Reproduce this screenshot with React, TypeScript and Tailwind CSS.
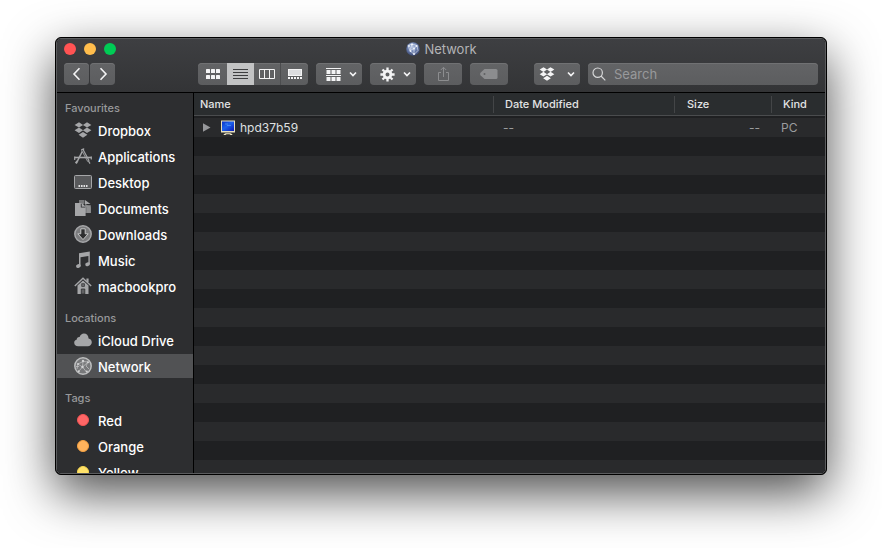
import type { ReactNode } from "react";

function DropboxIcon({ className }: { className?: string }) {
    return (
        <svg className={className} viewBox="0 0 18 16" fill="currentColor">
            <path d="M5 0.2 9.1 2.9 5 5.6 0.6 2.9ZM13 0.2 17.4 2.9 13 5.6 8.9 2.9ZM5 5.5 9.1 8.2 5 10.9 0.6 8.2ZM13 5.5 17.4 8.2 13 10.9 8.9 8.2ZM9 10 13.4 12.8 9 15.8 4.6 12.8Z" />
        </svg>
    );
}

function ApplicationsIcon() {
    return (
        <svg className="w-[18px] h-[18px]" viewBox="0 0 18 18" fill="none" stroke="currentColor">
            <path d="M9.8 1.5 3.2 14.5" strokeWidth="1.6" />
            <path d="M8 2 14.5 14.2" strokeWidth="2.6" />
            <path d="M8.3 3 14.3 14.2" strokeWidth="0.7" stroke="#2d2e30" />
            <path d="M14.2 13.5 16 16.6" strokeWidth="1.2" />
            <path d="M3.4 14 1.8 16.4" strokeWidth="2.2" />
            <path d="M0.5 10.5H17.5" strokeWidth="1.6" />
            <path d="M0.7 9.5V13M17.3 9.5V12.5" strokeWidth="1.2" />
        </svg>
    );
}

function DesktopIcon() {
    return (
        <svg className="w-[18px] h-[18px]" viewBox="0 0 18 18" fill="none">
            <rect x="0.5" y="2.5" width="17" height="13" rx="1" fill="#58595b" stroke="currentColor" />
            <path d="M4.500 13h9" stroke="#e0e0e1" strokeWidth="2" strokeDasharray="1.600 0.900" />
        </svg>
    );
}

function DocumentsIcon() {
    return (
        <svg className="w-[18px] h-[18px]" viewBox="0 0 18 18">
            <path d="M5 1h5.5v4h1.2L16.8 8.5V14H11V5H5Z" fill="#77787a" />
            <path d="M11 1v4h5.5Z" fill="currentColor" />
            <path d="M11.7 6.2h5.1V14h-4.1V8.6l-1-1Z" fill="#8d8e90" />
            <path d="M1 4h5.8v4.6h4.8V17H1Z" fill="currentColor" />
            <path d="M7.7 3.8v4h4Z" fill="currentColor" />
        </svg>
    );
}

function DownloadsIcon() {
    return (
        <svg className="w-[18px] h-[18px]" viewBox="0 0 18 18">
            <circle cx="9" cy="9" r="8.2" fill="#7b7c7e" stroke="currentColor" strokeWidth="1.5" />
            <path d="M6.800 3.800h4.400v5h3L9 14.600 3.800 8.800h3Z" fill="#2d2e30" stroke="#c4c5c6" />
        </svg>
    );
}

function MusicIcon() {
    return (
        <svg className="w-[18px] h-[18px]" viewBox="0 0 18 18" fill="currentColor">
            <path d="M5 2.2 15.8 0.5V13h-1.4V5L6.5 6.3V15H5Z" />
            <ellipse cx="4.4" cy="15" rx="2.4" ry="1.9" transform="rotate(-18 4.4 15)" />
            <ellipse cx="13.6" cy="13.3" rx="2.4" ry="1.9" transform="rotate(-18 13.6 13.3)" />
        </svg>
    );
}

function HomeIcon() {
    return (
        <svg className="w-[18px] h-[18px]" viewBox="0 0 18 18" fill="none" stroke="currentColor">
            <path d="M0.8 9 9 1.2 17.2 9" strokeWidth="1.400" />
            <path d="M13.5 1.5V5" strokeWidth="2.2" />
            <path d="M3.5 8.500 9 3.400 14.5 8.500V17h-11Z" fill="currentColor" stroke="none" />
            <path d="M7.3 17v-5h3.5v5Z" fill="#606163" stroke="#2d2e30" strokeWidth="0.8" />
            <rect x="7.8" y="6.8" width="2.5" height="2.5" fill="#77787a" stroke="#2d2e30" strokeWidth="0.8" />
        </svg>
    );
}

function CloudIcon() {
    return (
        <svg className="w-[18px] h-[18px]" viewBox="0 0 18 18" fill="currentColor">
            <path d="M4.1 15.2C1.8 15.2.2 13.8.2 11.8c0-1.7 1-2.9 2.6-3.3C2.7 7 4 5.8 5.6 6.1 6.3 3.7 8 2.5 9.9 2.5c2.6 0 4.6 2 4.7 4.9 2 .3 3.2 1.8 3.2 3.8 0 2.3-1.7 4-4 4Z" />
        </svg>
    );
}

function NetworkIcon() {
    return (
        <svg className="w-[18px] h-[18px]" viewBox="0 0 18 18" fill="none" stroke="#bcbdbe">
            <circle cx="9" cy="9" r="8.2" strokeWidth="1.5" fill="#77787a" />
            <path d="M9 4.5 4 7M9 4.5 14 5M9 4.5 8.5 10M8.5 10 4.5 14.5M8.5 10 12.5 15M4 7 3 12M14 5 12 9 15 12M4 7 8.5 10 14 5M2 9.5h3" strokeWidth="0.8" />
            <g fill="#d2d3d4" stroke="none">
                <circle cx="9" cy="4" r="1.2" />
                <circle cx="4" cy="7" r="1" />
                <circle cx="14" cy="5.2" r="1" />
                <circle cx="8.5" cy="10" r="1.2" />
                <circle cx="4.8" cy="14.2" r="1" />
                <circle cx="12.8" cy="14.5" r="1" />
            </g>
        </svg>
    );
}

function GlobeIcon() {
    return (
        <svg className="w-4 h-4" viewBox="0 0 16 16" fill="none">
            <defs>
                <radialGradient id="globe" cx="0.45" cy="0.35" r="0.7">
                    <stop offset="0" stopColor="#b9c8e6" />
                    <stop offset="0.5" stopColor="#6c80ae" />
                    <stop offset="1" stopColor="#2f3b63" />
                </radialGradient>
            </defs>
            <circle cx="8" cy="8" r="6.8" fill="url(#globe)" />
            <path d="M3 4.5 7 3l5 1.5M3 4.5l2 5 4-2 3-3 1 5-4 4-4-4M5 9.5 7 3M9 7.5v6" stroke="#dbe3f2" strokeWidth="0.7" />
            <g fill="#eef2fa">
                <circle cx="7" cy="3.5" r="1.1" />
                <circle cx="11.5" cy="5" r="1" />
                <circle cx="4" cy="5" r="0.9" />
                <circle cx="9" cy="7.5" r="1" />
                <circle cx="5.5" cy="10" r="0.9" />
                <circle cx="9" cy="13" r="0.9" />
            </g>
        </svg>
    );
}

function ComputerIcon() {
    return (
        <svg className="w-4 h-4" viewBox="0 0 16 16">
            <defs>
                <linearGradient id="screen" x1="0" y1="0" x2="1" y2="1">
                    <stop offset="0" stopColor="#0b35c8" />
                    <stop offset="0.45" stopColor="#1d62ec" />
                    <stop offset="1" stopColor="#0818b4" />
                </linearGradient>
            </defs>
            <rect x="1" y="0.5" width="14" height="12" fill="#e6dfbf" />
            <rect x="2" y="1.5" width="12" height="9.5" fill="url(#screen)" />
            <path d="M5 4h3M7 5.5h4" stroke="#4f92f5" strokeWidth="0.8" />
            <path d="M5.5 13.2h5l1.800 1v0.800H10.500l-1-.8h-3l-1 .8H3.700v-.8Z" fill="#efe8c8" />
        </svg>
    );
}

function GearIcon() {
    return (
        <svg className="w-[15px] h-[15px]" viewBox="0 0 15 15" fill="none" stroke="currentColor">
            <circle cx="7.5" cy="7.5" r="3.4" strokeWidth="2.8" />
            <path d="M7.5 0.4V3M7.5 12v2.6M0.4 7.5H3M12 7.5h2.6M2.5 2.5l1.8 1.8M10.7 10.7l1.8 1.8M2.5 12.5l1.8-1.8M10.7 4.3l1.8-1.8" strokeWidth="2.3" />
        </svg>
    );
}

function Chevron() {
    return (
        <svg className="w-2 h-2" viewBox="0 0 8 8" fill="none" stroke="currentColor" strokeWidth="1.7">
            <path d="M1 2.5 4 5.5 7 2.5" />
        </svg>
    );
}

interface ToolButtonProps {
    label: string;
    className?: string;
    disabled?: boolean;
    children: ReactNode;
}

function ToolButton({ label, className = "", disabled, children }: ToolButtonProps) {
    return (
        <button
            type="button"
            aria-label={label}
            disabled={disabled}
            className={`flex items-center justify-center h-[22px] shrink-0 shadow-[inset_0_1px_#707173] bg-linear-to-b from-[#636466] to-[#5c5d5f] text-[#f4f4f5] disabled:text-[#8c8d8f] ${className}`}
        >
            {children}
        </button>
    );
}

function Toolbar() {
    return (
        <div className="flex items-center mt-1">
            <div className="flex gap-px w-[134px] shrink-0">
                <ToolButton label="Back" className="w-[25px] rounded">
                    <svg className="w-4 h-4" viewBox="0 0 16 16" fill="none" stroke="currentColor" strokeWidth="1.6">
                        <path d="M10.5 2.2 5 8l5.500 5.800" />
                    </svg>
                </ToolButton>
                <ToolButton label="Forward" className="w-[25px] rounded">
                    <svg className="w-4 h-4" viewBox="0 0 16 16" fill="none" stroke="currentColor" strokeWidth="1.6">
                        <path d="M5.5 2.2 11 8l-5.500 5.800" />
                    </svg>
                </ToolButton>
            </div>
            <div className="flex gap-2 shrink-0">
                <div className="flex">
                    <ToolButton label="Icon view" className="w-[29px] rounded-l">
                        <svg className="w-[14px] h-[10px]" viewBox="0 0 14 10" fill="currentColor">
                            <rect width="4" height="4" rx="0.6" />
                            <rect x="5" width="4" height="4" rx="0.6" />
                            <rect x="10" width="4" height="4" rx="0.6" />
                            <rect y="6" width="4" height="4" rx="0.6" />
                            <rect x="5" y="6" width="4" height="4" rx="0.6" />
                            <rect x="10" y="6" width="4" height="4" rx="0.6" />
                        </svg>
                    </ToolButton>
                    <button
                        type="button"
                        aria-label="List view"
                        aria-pressed="true"
                        className="flex items-center justify-center w-[27px] h-[22px] bg-[#c2c3c4] text-[#3d3e40]"
                    >
                        <svg className="w-[15px] h-[10px]" viewBox="0 0 15 10" fill="currentColor">
                            <path d="M0 0h15v1H0ZM0 3h15v1H0ZM0 6h15v1H0ZM0 9h15v1H0Z" />
                        </svg>
                    </button>
                    <ToolButton label="Column view" className="w-[27px] border-r border-r-[#4c4d4f]">
                        <svg className="w-4 h-[10px]" viewBox="0 0 16 10" fill="none" stroke="currentColor">
                            <path d="M0.5 0.5h15v9h-15ZM5.5 0.5V9.5M10.5 0.5V9.5" />
                        </svg>
                    </ToolButton>
                    <ToolButton label="Gallery view" className="w-[27px] rounded-r">
                        <svg className="w-[14px] h-[10px]" viewBox="0 0 14 10" fill="currentColor">
                            <rect x="0.5" y="0.5" width="13" height="6" fill="#dcdddf" stroke="currentColor" />
                            <path d="M0 8h2v2H0ZM3 8h2v2H3ZM6 8h2v2H6ZM9 8h2v2H9ZM12 8h2v2h-2Z" />
                        </svg>
                    </ToolButton>
                </div>
                <ToolButton label="Group items" className="w-[46px] rounded gap-2 pl-1">
                    <svg className="w-[15px] h-[13px]" viewBox="0 0 15 13" fill="currentColor">
                        <path d="M0 0h15v1H0ZM0 7h15v1H0Z" />
                        <path d="M0.500 2h4v4h-4ZM5.500 2h4v4h-4ZM10.500 2h4v4h-4ZM0.500 9h4v4h-4ZM5.500 9h4v4h-4ZM10.500 9h4v4h-4Z" />
                    </svg>
                    <Chevron />
                </ToolButton>
                <ToolButton label="Actions" className="w-[46px] rounded gap-2 pl-1">
                    <GearIcon />
                    <Chevron />
                </ToolButton>
                <ToolButton label="Share" className="w-[38px] rounded" disabled>
                    <svg className="w-[13px] h-4" viewBox="0 0 13 16" fill="none" stroke="currentColor">
                        <path d="M4 6.5H1.5v8h10v-8H9M6.5 11V1.5M3.8 4 6.5 1.3 9.2 4" />
                    </svg>
                </ToolButton>
                <ToolButton label="Edit tags" className="w-[38px] rounded" disabled>
                    <svg className="w-[18px] h-[10px]" viewBox="0 0 18 10" fill="currentColor">
                        <path d="M4.5 0H16a1.5 1.5 0 0 1 1.5 1.5v7A1.5 1.5 0 0 1 16 10H4.5L.5 6.3Q-.3 5 .5 3.7Z" />
                        <circle cx="4.5" cy="5" r="1" fill="#606163" />
                    </svg>
                </ToolButton>
            </div>
            <div className="flex flex-1 min-w-0 gap-2 ml-[26px]">
                <ToolButton label="Dropbox" className="w-[46px] rounded gap-3">
                    <DropboxIcon className="w-4 h-[14px]" />
                    <Chevron />
                </ToolButton>
                <label className="flex flex-1 min-w-0 items-center h-[22px] gap-2 px-1 rounded shadow-[inset_0_1px_#707173] bg-linear-to-b from-[#636466] to-[#5c5d5f]">
                    <svg className="w-[14px] h-[14px] shrink-0" viewBox="0 0 14 14" fill="none" stroke="#d6d7d8" strokeWidth="1.2">
                        <circle cx="5.7" cy="5.7" r="4.7" />
                        <path d="m9 9 4.3 4.3" />
                    </svg>
                    <input
                        type="search"
                        aria-label="Search"
                        placeholder="Search"
                        className="flex-1 min-w-0 bg-transparent text-[13px] leading-4 text-white outline-none placeholder:text-[#98999b]"
                    />
                </label>
            </div>
        </div>
    );
}

function Tag({ className }: { className: string }) {
    return (
        <span className="flex w-[18px] justify-center">
            <span className={`w-3 h-3 rounded-full border ${className}`} />
        </span>
    );
}

interface SidebarItem {
    name: string;
    icon: ReactNode;
    active?: boolean;
}

const sections: { title: string; items: SidebarItem[] }[] = [
    {
        title: "Favourites",
        items: [
            { name: "Dropbox", icon: <DropboxIcon className="w-[18px] h-4" /> },
            { name: "Applications", icon: <ApplicationsIcon /> },
            { name: "Desktop", icon: <DesktopIcon /> },
            { name: "Documents", icon: <DocumentsIcon /> },
            { name: "Downloads", icon: <DownloadsIcon /> },
            { name: "Music", icon: <MusicIcon /> },
            { name: "macbookpro", icon: <HomeIcon /> },
        ],
    },
    {
        title: "Locations",
        items: [
            { name: "iCloud Drive", icon: <CloudIcon /> },
            { name: "Network", icon: <NetworkIcon />, active: true },
        ],
    },
    {
        title: "Tags",
        items: [
            { name: "Red", icon: <Tag className="bg-[#ff6767] border-[#f45555]" /> },
            { name: "Orange", icon: <Tag className="bg-[#ffb35c] border-[#f5a243]" /> },
            { name: "Yellow", icon: <Tag className="bg-[#ffe26a] border-[#f5d650]" /> },
        ],
    },
];

function Sidebar() {
    return (
        <nav className="flex flex-col gap-[10px] w-[137px] shrink-0 pt-[5px] overflow-y-auto [scrollbar-width:none] border-r border-black bg-[#2d2e30]">
            {sections.map((section) => (
                <section key={section.title}>
                    <h2 className="pl-2 text-[11px] leading-5 font-medium text-[#98999b]">{section.title}</h2>
                    <ul className="flex flex-col gap-0.5">
                        {section.items.map((item) => (
                            <li key={item.name}>
                                <a
                                    href="#"
                                    className={`flex items-center h-6 gap-1.5 pl-[17px] text-[13px] font-medium text-white ${item.active ? "bg-[#515254]" : ""}`}
                                >
                                    <span className="text-[#a5a6a8]">{item.icon}</span>
                                    <span className="pt-0.5 leading-5">{item.name}</span>
                                </a>
                            </li>
                        ))}
                    </ul>
                </section>
            ))}
        </nav>
    );
}

function FileList() {
    return (
        <main className="flex-1 min-w-0 overflow-hidden bg-[repeating-linear-gradient(to_bottom,#292a2c_0px,#292a2c_19px,#1f2022_19px,#1f2022_38px)] bg-[position:0_25px] bg-[size:100%_38px]">
            <div className="h-[23px] -mb-[23px] border-b border-[#4a4c4e] bg-[#2a2d2f]" />
            <table className="relative w-full table-fixed border-separate border-spacing-0 text-left">
                <colgroup>
                    <col />
                    <col className="w-[181px]" />
                    <col className="w-[97px]" />
                    <col className="w-[53px]" />
                </colgroup>
                <thead className="text-[11px] text-[#e2e3e4]">
                    <tr className="h-[25px]">
                        <th className="p-0 pt-[3px] align-top font-medium">
                            <div className="h-[17px] pl-1.5 leading-4 border-r border-[#434547]">Name</div>
                        </th>
                        <th className="p-0 pt-[3px] align-top font-medium">
                            <div className="h-[17px] pl-[11px] leading-4 border-r border-[#434547]">Date Modified</div>
                        </th>
                        <th className="p-0 pt-[3px] align-top font-medium">
                            <div className="h-[17px] pl-3 leading-4 border-r border-[#434547]">Size</div>
                        </th>
                        <th className="p-0 pt-[3px] align-top font-medium">
                            <div className="h-[17px] pl-[11px] leading-4">Kind</div>
                        </th>
                    </tr>
                </thead>
                <tbody className="text-xs text-[#9b9c9e]">
                    <tr className="h-[19px]">
                        <td className="p-0">
                            <div className="flex items-center pl-2 text-[#dfe0e1]">
                                <button type="button" aria-label="Expand hpd37b59" className="text-[#96979a]">
                                    <svg className="w-[9px] h-[9px]" viewBox="0 0 9 9" fill="currentColor">
                                        <path d="M1 0.3 8.5 4.5 1 8.7Z" />
                                    </svg>
                                </button>
                                <span className="ml-[9px] mr-1">
                                    <ComputerIcon />
                                </span>
                                hpd37b59
                            </div>
                        </td>
                        <td className="p-0 pl-[9px]">--</td>
                        <td className="p-0 pr-3 text-right">--</td>
                        <td className="p-0 pl-[9px]">PC</td>
                    </tr>
                </tbody>
            </table>
        </main>
    );
}

function App() {
    return (
        <div className="flex flex-col h-screen px-[55px] pt-[37px] pb-[73px] overflow-hidden bg-white font-['Inter','Liberation_Sans',sans-serif]">
            <div className="flex flex-col flex-1 min-h-0 rounded-md border border-black bg-black shadow-[0_18px_50px_rgba(0,0,0,0.7)]">
                <div className="flex flex-col flex-1 min-h-0 overflow-hidden rounded-[5px] border border-[#5b5c5e]">
                    <header className="px-[7px] pb-[7px] border-b border-black bg-linear-to-b from-[#3e3f42] to-[#333436]">
                        <div className="grid grid-cols-[1fr_auto_1fr] items-center h-5">
                            <div className="flex gap-2">
                                <button type="button" aria-label="Close" className="w-3 h-3 rounded-full bg-[#ff5353]" />
                                <button type="button" aria-label="Minimise" className="w-3 h-3 rounded-full bg-[#ffbd4c]" />
                                <button type="button" aria-label="Zoom" className="w-3 h-3 rounded-full bg-[#00cc55]" />
                            </div>
                            <h1 className="flex items-center gap-[3px] text-[13px] leading-5 text-[#b3b4b6]">
                                <GlobeIcon />
                                Network
                            </h1>
                        </div>
                        <Toolbar />
                    </header>
                    <div className="flex flex-1 min-h-0">
                        <Sidebar />
                        <FileList />
                    </div>
                </div>
            </div>
        </div>
    );
}

export default App;
